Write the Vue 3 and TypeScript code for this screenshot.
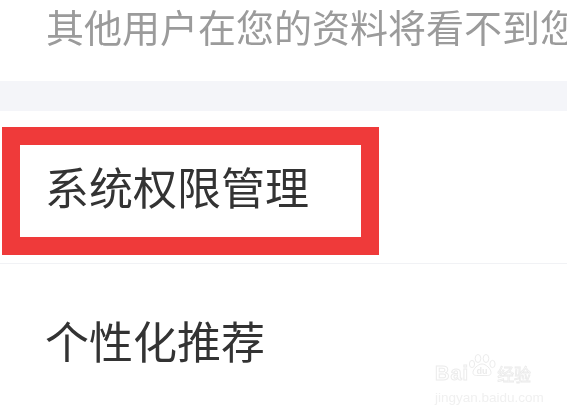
<script setup lang="ts">
const note = '其他用户在您的资料将看不到您'
const items = ['系统权限管理', '个性化推荐']
</script>

<template>
  <div class="page">
    <p class="note">{{ note }}</p>
    <div class="band"></div>
    <ul class="list">
      <li v-for="(item, i) in items" :key="item" class="row">
        <span class="label">{{ item }}</span>
        <span v-if="i === 0" class="mark"></span>
      </li>
    </ul>
    <div class="wm">
      <div class="wm-top">
        <span class="wm-bai">Bai</span>
        <svg class="wm-paw" viewBox="0 0 30 22" width="30" height="22">
          <g fill="#fff" stroke="#ececec" stroke-width="1">
            <ellipse cx="5" cy="10" rx="2.6" ry="3.6" />
            <ellipse cx="11" cy="4.5" rx="2.8" ry="4" />
            <ellipse cx="19" cy="4.5" rx="2.8" ry="4" />
            <ellipse cx="25.5" cy="10" rx="2.6" ry="3.6" />
            <path d="M15 10c-4 0-9 5-9 8.500s3 3 9 3 9 .5 9-3S19 10 15 10z" />
          </g>
          <text x="15" y="20" text-anchor="middle" class="wm-du">du</text>
        </svg>
        <span class="wm-jy">经验</span>
      </div>
      <div class="wm-url">jingyan.baidu.com</div>
    </div>
  </div>
</template>

<style>
html, body { margin: 0; background: #fff; }
</style>

<style scoped>
.page {
  position: relative;
  width: 567px;
  height: 415px;
  overflow: hidden;
  background: #fff;
  font-family: "Noto Sans CJK SC", "Liberation Sans", sans-serif;
  filter: blur(0.35px);
}
.note {
  margin: 0;
  height: 81px;
  padding-left: 46px;
  box-sizing: border-box;
  font-size: 38px;
  line-height: 52px;
  color: #9b9b9b;
  white-space: nowrap;
}
.band {
  height: 30px;
  background: #f4f5f9;
}
.list {
  margin: 0;
  padding: 0;
  list-style: none;
}
.row {
  position: relative;
  display: flex;
  align-items: center;
  height: 152px;
  padding-left: 45px;
  border-bottom: 1px solid #f1f2f5;
  color: #333;
  font-size: 44px;
}
.row:last-child {
  border-bottom: none;
  height: 154px;
}
.label {
  position: relative;
  top: -1px;
}
.mark {
  position: absolute;
  left: 2px;
  top: 16px;
  width: 341px;
  height: 92px;
  border: 18px solid #ef3a3a;
}
.wm {
  position: absolute;
  left: 435px;
  top: 354px;
  width: 102px;
  font-family: "Liberation Sans", sans-serif;
}
.wm-top {
  display: flex;
  align-items: flex-end;
  height: 31px;
}
.wm-bai {
  font-size: 20px;
  font-weight: 700;
  line-height: 23px;
  letter-spacing: 1px;
  color: #fff;
  -webkit-text-stroke: 1px #ececec;
}
.wm-paw {
  align-self: flex-start;
  margin-left: -2px;
}
.wm-du {
  font: 700 9px "Liberation Sans", sans-serif;
  fill: #ebebeb;
  stroke: none;
}
.wm-jy {
  font-family: "Noto Sans CJK SC", sans-serif;
  font-size: 17px;
  line-height: 22px;
  color: #fff;
  -webkit-text-stroke: 0.8px #ebebeb;
  white-space: nowrap;
}
.wm-url {
  margin-top: 6px;
  font-size: 13.500px;
  line-height: 13px;
  color: #f0f0f0;
  white-space: nowrap;
}
</style>
